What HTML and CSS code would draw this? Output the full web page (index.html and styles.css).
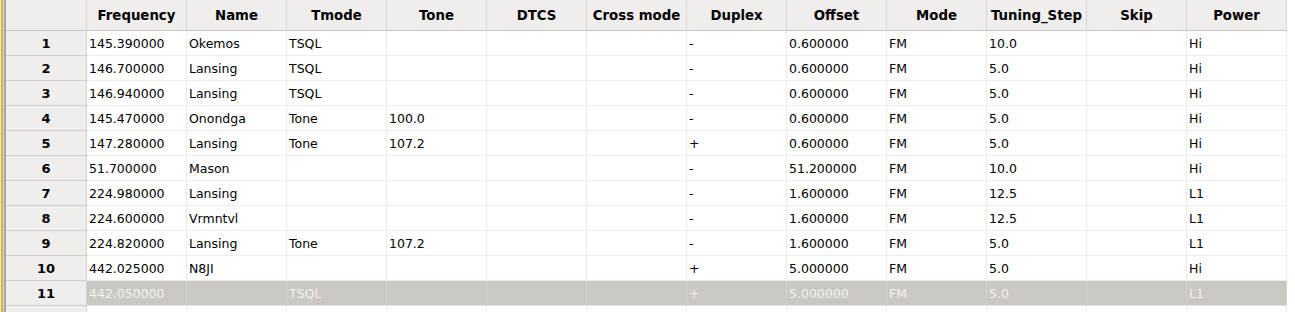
FILE: index.html
```html
<!DOCTYPE html>
<html>
<head>
<meta charset="utf-8">
<link rel="stylesheet" href="styles.css">
</head>
<body>
<div class="frame">
  <div class="edge"></div>
  <table class="grid">
    <thead>
      <tr>
        <th class="corner"></th>
        <th>Frequency</th><th>Name</th><th>Tmode</th><th>Tone</th><th>DTCS</th><th>Cross mode</th><th>Duplex</th><th>Offset</th><th>Mode</th><th>Tuning_Step</th><th>Skip</th><th>Power</th>
      </tr>
    </thead>
    <tbody>
      <tr><th>1</th><td>145.390000</td><td>Okemos</td><td>TSQL</td><td></td><td></td><td></td><td>-</td><td>0.600000</td><td>FM</td><td>10.0</td><td></td><td>Hi</td></tr>
      <tr><th>2</th><td>146.700000</td><td>Lansing</td><td>TSQL</td><td></td><td></td><td></td><td>-</td><td>0.600000</td><td>FM</td><td>5.0</td><td></td><td>Hi</td></tr>
      <tr><th>3</th><td>146.940000</td><td>Lansing</td><td>TSQL</td><td></td><td></td><td></td><td>-</td><td>0.600000</td><td>FM</td><td>5.0</td><td></td><td>Hi</td></tr>
      <tr><th>4</th><td>145.470000</td><td>Onondga</td><td>Tone</td><td>100.0</td><td></td><td></td><td>-</td><td>0.600000</td><td>FM</td><td>5.0</td><td></td><td>Hi</td></tr>
      <tr><th>5</th><td>147.280000</td><td>Lansing</td><td>Tone</td><td>107.2</td><td></td><td></td><td>+</td><td>0.600000</td><td>FM</td><td>5.0</td><td></td><td>Hi</td></tr>
      <tr><th>6</th><td>51.700000</td><td>Mason</td><td></td><td></td><td></td><td></td><td>-</td><td>51.200000</td><td>FM</td><td>10.0</td><td></td><td>Hi</td></tr>
      <tr><th>7</th><td>224.980000</td><td>Lansing</td><td></td><td></td><td></td><td></td><td>-</td><td>1.600000</td><td>FM</td><td>12.5</td><td></td><td>L1</td></tr>
      <tr><th>8</th><td>224.600000</td><td>Vrmntvl</td><td></td><td></td><td></td><td></td><td>-</td><td>1.600000</td><td>FM</td><td>12.5</td><td></td><td>L1</td></tr>
      <tr><th>9</th><td>224.820000</td><td>Lansing</td><td>Tone</td><td>107.2</td><td></td><td></td><td>-</td><td>1.600000</td><td>FM</td><td>5.0</td><td></td><td>L1</td></tr>
      <tr><th>10</th><td>442.025000</td><td>N8JI</td><td></td><td></td><td></td><td></td><td>+</td><td>5.000000</td><td>FM</td><td>5.0</td><td></td><td>Hi</td></tr>
      <tr class="selected"><th>11</th><td>442.050000</td><td></td><td>TSQL</td><td></td><td></td><td></td><td>+</td><td>5.000000</td><td>FM</td><td>5.0</td><td></td><td>L1</td></tr>
      <tr><th></th><td></td><td></td><td></td><td></td><td></td><td></td><td></td><td></td><td></td><td></td><td></td><td></td></tr>
    </tbody>
  </table>
</div>
</body>
</html>
```

FILE: styles.css
```css
html, body {
  margin: 0;
  padding: 0;
  background: #ffffff;
  overflow: hidden;
}
.frame {
  display: flex;
  align-items: flex-start;
  height: 312px;
  overflow: hidden;
  font-family: "DejaVu Sans", sans-serif;
  font-size: 12.5px;
  color: #000;
}
.edge {
  flex: 0 0 6px;
  height: 312px;
  background: linear-gradient(to right, #f6eab0 0 1px, #dcb440 1px 3px, #d8d4c8 3px 4px, #a6a6a6 4px 6px);
}
.grid {
  border-collapse: separate;
  border-spacing: 0;
  table-layout: fixed;
  width: 1281px;
}
.grid th, .grid td {
  box-sizing: border-box;
  padding: 0;
  white-space: nowrap;
  overflow: hidden;
}
.grid thead th {
  height: 31px;
  width: 100px;
  background: #efeeec;
  border-right: 1px solid #d9d7d4;
  border-bottom: 1px solid #c9c7c4;
  font-size: 13.3px;
  font-weight: bold;
  text-align: center;
  vertical-align: middle;
}
.grid thead th.corner {
  width: 81px;
}
.grid tbody th {
  height: 25px;
  background: #efeeec;
  border-right: 1px solid #d2d0cd;
  border-bottom: 1px solid #d2d0cd;
  font-size: 13px;
  font-weight: bold;
  text-align: center;
  vertical-align: middle;
}
.grid tbody td {
  height: 25px;
  padding-left: 2px;
  border-right: 1px solid #ededed;
  border-bottom: 1px solid #ededed;
  vertical-align: middle;
}
.grid tbody tr.selected td {
  background: #cbc7c2;
  color: #f3f2f0;
  border-right-color: #d6d3cf;
  border-bottom-color: #e4e2df;
}
```
